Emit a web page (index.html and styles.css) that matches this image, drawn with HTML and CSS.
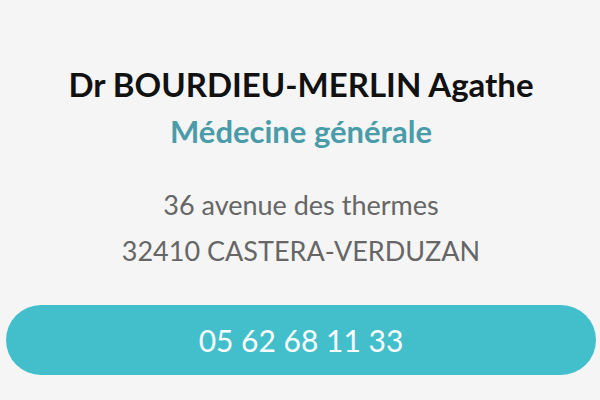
FILE: index.html
```html
<!DOCTYPE html>
<html lang="fr">
<head>
<meta charset="utf-8">
<link rel="stylesheet" href="styles.css">
</head>
<body>
<div class="card">
  <h1 class="name">Dr BOURDIEU-MERLIN Agathe</h1>
  <p class="specialty">Médecine générale</p>
  <div class="address">
    <p>36 avenue des thermes</p>
    <p>32410 CASTERA-VERDUZAN</p>
  </div>
  <a class="phone" href="#">05 62 68 11 33</a>
</div>
</body>
</html>
```

FILE: styles.css
```css
html, body {
  margin: 0;
  padding: 0;
  background: #f5f5f5;
}
body {
  width: 600px;
  height: 400px;
  overflow: hidden;
  font-family: Lato, "Open Sans", sans-serif;
}
.card {
  display: flex;
  flex-direction: column;
  align-items: center;
  padding: 61px 4px 0 6px;
  text-align: center;
}
.name {
  margin: 0;
  font-size: 33px;
  font-weight: 700;
  line-height: 46px;
  color: #111;
}
.specialty {
  margin: 1px 0 0;
  font-size: 31px;
  font-weight: 700;
  line-height: 46px;
  color: #4a9ca9;
}
.address {
  margin-top: 28px;
  color: #666;
  font-size: 27px;
  line-height: 46px;
}
.address p {
  margin: 0;
}
.phone {
  margin-top: 31px;
  align-self: stretch;
  height: 70px;
  border-radius: 35px;
  background: #42bfcb;
  color: #fff;
  text-decoration: none;
  font-size: 30px;
  display: flex;
  align-items: center;
  justify-content: center;
}
```
